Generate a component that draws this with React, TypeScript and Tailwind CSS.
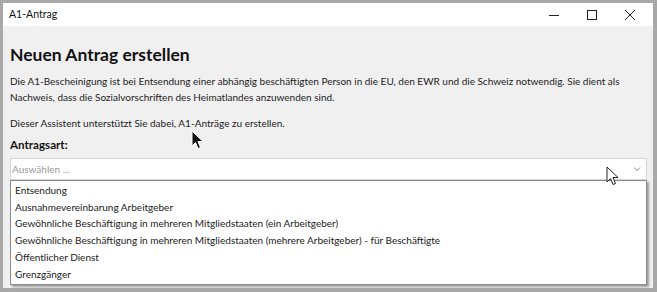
import React from 'react';

// Auswahl-Optionen für die Antragsart
const antragsarten: string[] = [
  'Entsendung',
  'Ausnahmevereinbarung Arbeitgeber',
  'Gewöhnliche Beschäftigung in mehreren Mitgliedstaaten (ein Arbeitgeber)',
  'Gewöhnliche Beschäftigung in mehreren Mitgliedstaaten (mehrere Arbeitgeber) - für Beschäftigte',
  'Öffentlicher Dienst',
  'Grenzgänger',
];

const font = { fontFamily: 'Lato, "Noto Sans", sans-serif' };

const ArrowCursor: React.FC<{ white?: boolean }> = ({ white }) => (
  <svg width="14" height="20" viewBox="0 0 14 20">
    <path
      d="M1 1 L1 16 L4.5 12.5 L7 18.5 L9.5 17.5 L7 11.5 L12 11.5 Z"
      fill={white ? '#ffffff' : '#111111'}
      stroke={white ? '#222222' : '#ffffff'}
      strokeWidth="1"
      strokeLinejoin="round"
    />
  </svg>
);

const App: React.FC = () => {
  return (
    <div className="w-[657px] h-[292px] bg-[#a8a8a8] pt-[3px] pl-[3px] pr-[4px] pb-[4px]" style={font}>
      <div className="relative flex flex-col h-full bg-[#f0f0f0]">
        {/* Titelleiste */}
        <div className="flex items-center h-[23px] bg-white pl-[6px] text-[10.5px] text-[#111]">
          <span>A1-Antrag</span>
          <div className="ml-auto flex items-center h-full pr-[4px]">
            <div className="w-[38px] h-full flex items-center justify-center">
              <svg width="10" height="10" viewBox="0 0 10 10"><path d="M0 5.5 H10" stroke="#222" strokeWidth="1" /></svg>
            </div>
            <div className="w-[38px] h-full flex items-center justify-center">
              <svg width="10" height="10" viewBox="0 0 10 10"><rect x="0.5" y="0.5" width="9" height="9" fill="none" stroke="#222" strokeWidth="1" /></svg>
            </div>
            <div className="w-[38px] h-full flex items-center justify-center">
              <svg width="10" height="10" viewBox="0 0 10 10"><path d="M0 0 L10 10 M10 0 L0 10" stroke="#222" strokeWidth="1" /></svg>
            </div>
          </div>
        </div>

        {/* Inhalt */}
        <div className="flex flex-col pl-[7px] pr-[6px] pt-[17px] text-[#1a1a1a]">
          <h1 className="text-[17.5px] font-bold leading-[24px] text-[#111]">Neuen Antrag erstellen</h1>
          <p className="mt-[6px] text-[10px] leading-[16px] text-[#222]">
            Die A1-Bescheinigung ist bei Entsendung einer abhängig beschäftigten Person in die EU, den EWR und die Schweiz notwendig. Sie dient als Nachweis, dass die Sozialvorschriften des Heimatlandes anzuwenden sind.
          </p>
          <p className="mt-[10px] text-[10px] leading-[16px] text-[#222]">
            Dieser Assistent unterstützt Sie dabei, A1-Anträge zu erstellen.
          </p>
          <div className="mt-[5px] text-[11.6px] font-bold leading-[18px] text-[#111]">Antragsart:</div>

          {/* Auswahlfeld */}
          <div className="mt-[4px] flex items-center h-[22px] bg-white border border-[#d6d6d6] pl-[1px] pr-[5px]">
            <span className="text-[10px] text-[#9a9a9a]">Auswählen ...</span>
            <svg className="ml-auto" width="8" height="6" viewBox="0 0 8 6">
              <path d="M1 1.5 L4 4.5 L7 1.5" fill="none" stroke="#888" strokeWidth="1" />
            </svg>
          </div>

          {/* Dropdown-Liste */}
          <div className="flex flex-col bg-white border border-[#8a8a8a] shadow-[2px_2px_2px_rgba(0,0,0,0.35)] py-[1px] pl-[4px]">
            {antragsarten.map((art) => (
              <div key={art} className="h-[16.8px] flex items-center text-[10px] text-[#222]">
                {art}
              </div>
            ))}
          </div>
        </div>

        {/* Mauszeiger */}
        <div className="absolute left-[188px] top-[127px]">
          <ArrowCursor />
        </div>
        <div className="absolute left-[603px] top-[163px]">
          <ArrowCursor white />
        </div>
      </div>
    </div>
  );
};

export default App;
